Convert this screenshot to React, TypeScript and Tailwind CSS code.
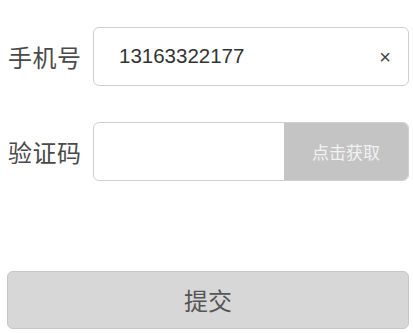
import React from "react";

const App: React.FC = () => {
    const [phone, setPhone] = React.useState("13163322177");
    const [code, setCode] = React.useState("");

    return (
        <div className="w-[413px] h-[333px] bg-white overflow-hidden font-['Noto_Sans_CJK_SC','Liberation_Sans',sans-serif]">
            <div className="flex items-center pt-[27px] pl-[8px] pr-[4px]">
                <label className="w-[85px] shrink-0 text-[24px] leading-none text-[#4a4a4a] tracking-[0.5px]">手机号</label>
                <div className="flex-1 min-w-0 h-[59px] flex items-center border border-[#cfcfcf] rounded-[6px] pl-[25px] pr-[17px]">
                    <input value={phone} onChange={(e) => setPhone(e.target.value)} className="flex-1 min-w-0 outline-none text-[20.5px] text-[#333] font-['Liberation_Sans',sans-serif] bg-transparent" />
                    <button onClick={() => setPhone("")} className="text-[20px] text-[#444] leading-none font-['Liberation_Sans',sans-serif]">×</button>
                </div>
            </div>
            <div className="flex items-center pt-[36px] pl-[8px] pr-[4px]">
                <label className="w-[85px] shrink-0 text-[24px] leading-none text-[#4a4a4a] tracking-[0.5px]">验证码</label>
                <div className="flex-1 min-w-0 h-[59px] flex border border-[#cfcfcf] rounded-[6px] overflow-hidden">
                    <input value={code} onChange={(e) => setCode(e.target.value)} className="flex-1 min-w-0 outline-none px-3 text-[20px] bg-transparent" />
                    <button className="w-[124px] shrink-0 bg-[#c4c4c4] text-[#f2f2f2] text-[17px]">点击获取</button>
                </div>
            </div>
            <div className="pt-[90px] pl-[7px] pr-[4px]">
                <button className="w-full h-[58px] bg-[#d7d7d7] border border-[#c6c6c6] rounded-[6px] text-[24px] text-[#555]">提交</button>
            </div>
        </div>
    );
};

export default App;
